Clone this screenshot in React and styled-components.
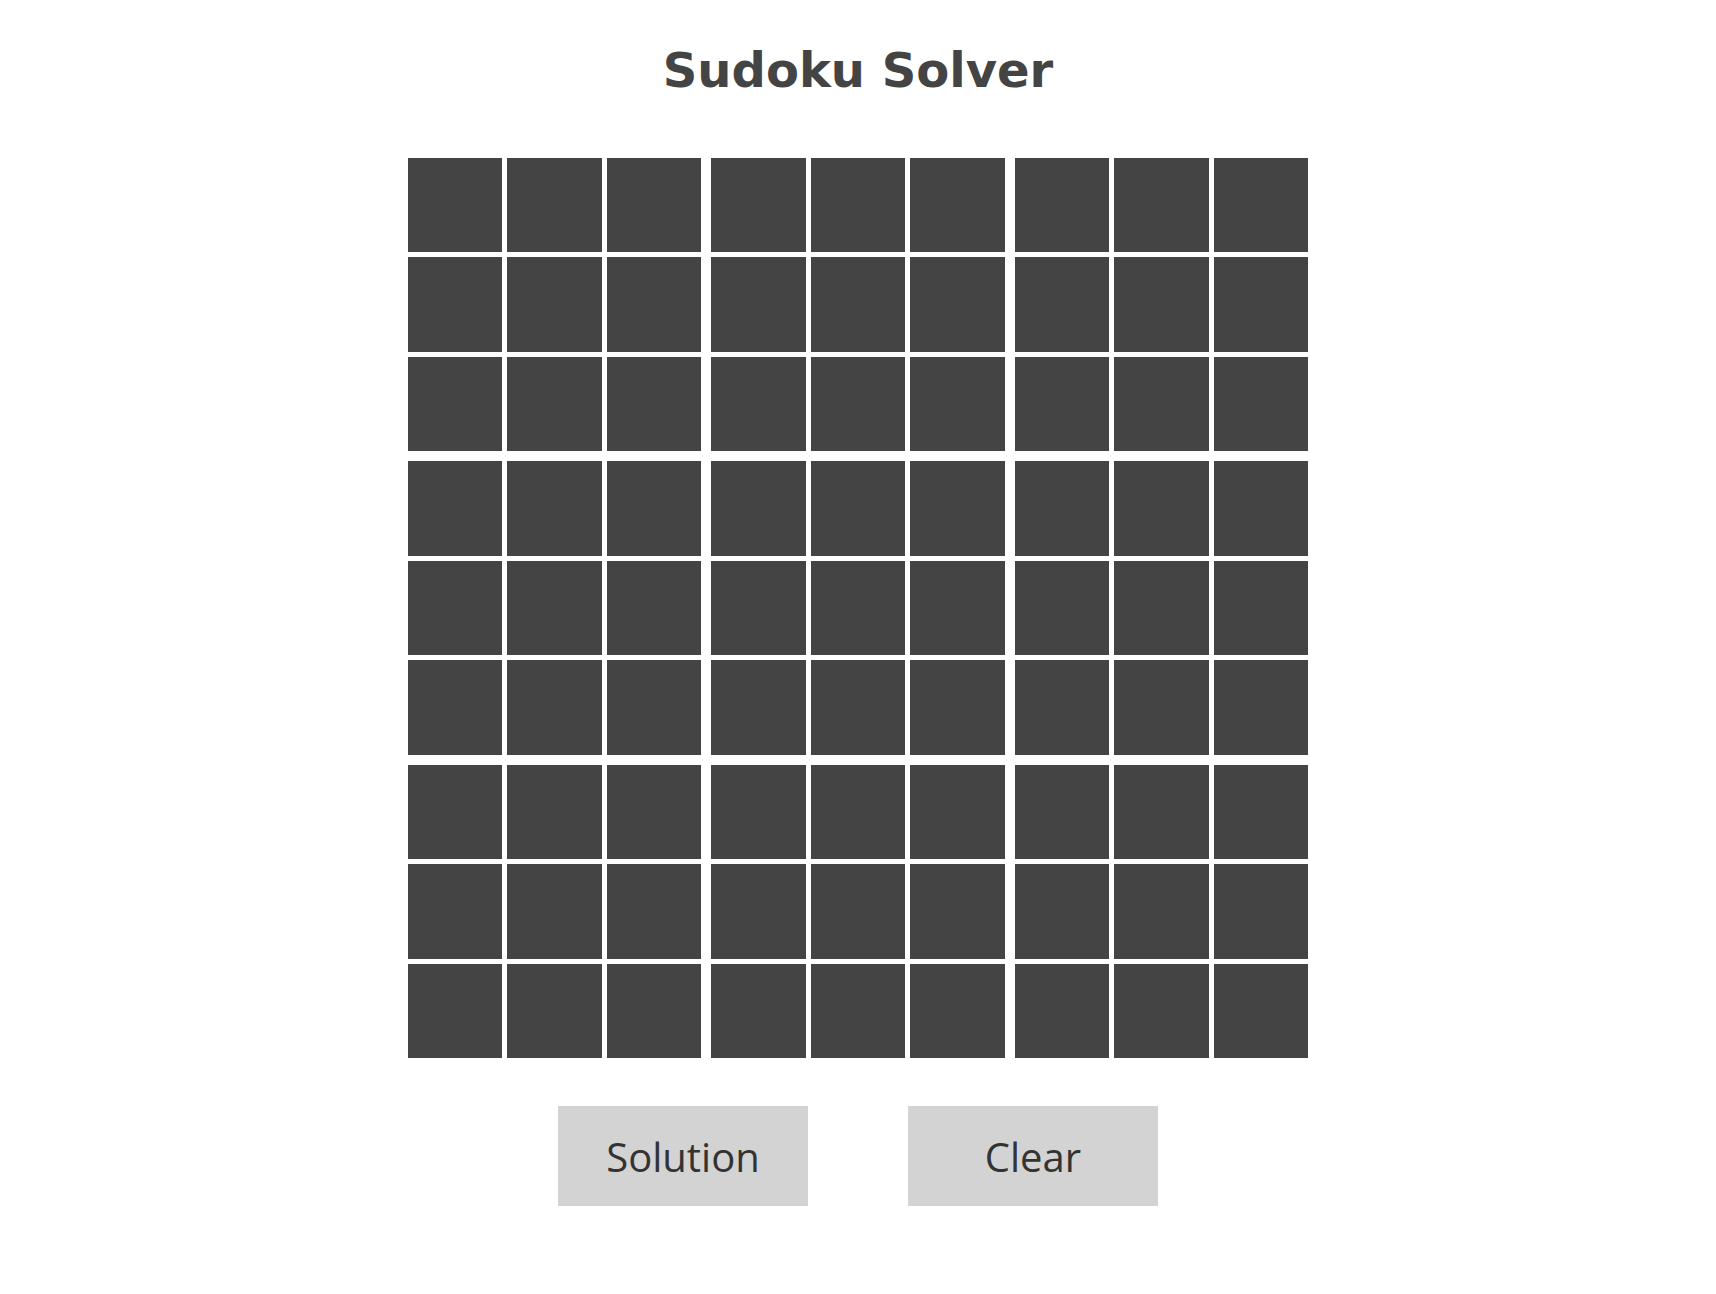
import React, { useState } from 'react';
import styled, { createGlobalStyle } from 'styled-components';

const GlobalStyle = createGlobalStyle`
  body {
    margin: 0;
    background: #ffffff;
    font-family: 'DejaVu Sans', sans-serif;
  }
`;

const Page = styled.div`
  display: flex;
  flex-direction: column;
  align-items: center;
  padding-top: 42px;
`;

const Title = styled.h1`
  margin: 0 0 60px;
  font-family: 'DejaVu Sans', sans-serif;
  font-size: 48px;
  line-height: 56px;
  font-weight: bold;
  color: #444444;
`;

const Board = styled.div`
  width: 900px;
  height: 900px;
  display: grid;
  grid-template-columns: repeat(3, 1fr);
  grid-template-rows: repeat(3, 1fr);
  gap: 10px;
`;

const Block = styled.div`
  display: grid;
  grid-template-columns: repeat(3, 1fr);
  grid-template-rows: repeat(3, 1fr);
  gap: 5px;
`;

const Cell = styled.input`
  width: 100%;
  height: 100%;
  box-sizing: border-box;
  border: none;
  outline: none;
  padding: 0;
  background: #444444;
  color: #ffffff;
  text-align: center;
  font-family: 'Open Sans', sans-serif;
  font-size: 40px;
`;

const Actions = styled.div`
  display: flex;
  gap: 100px;
  margin-top: 48px;
`;

const Button = styled.button`
  width: 250px;
  height: 100px;
  border: none;
  background: #d3d3d3;
  color: #333333;
  font-family: 'Open Sans', sans-serif;
  font-size: 40px;
  cursor: pointer;
  display: flex;
  align-items: center;
  justify-content: center;
`;

export default function App() {
  const [grid, setGrid] = useState(Array(81).fill(''));

  const update = (i, v) => {
    const next = grid.slice();
    next[i] = v.replace(/[^1-9]/g, '').slice(-1);
    setGrid(next);
  };

  // index of cell from block + position inside block
  const idx = (b, c) => {
    const row = Math.floor(b / 3) * 3 + Math.floor(c / 3);
    const col = (b % 3) * 3 + (c % 3);
    return row * 9 + col;
  };

  return (
    <>
      <GlobalStyle />
      <Page>
        <Title>Sudoku Solver</Title>
        <Board>
          {[...Array(9)].map((_, b) => (
            <Block key={b}>
              {[...Array(9)].map((_, c) => {
                const i = idx(b, c);
                return (
                  <Cell
                    key={i}
                    value={grid[i]}
                    onChange={(e) => update(i, e.target.value)}
                  />
                );
              })}
            </Block>
          ))}
        </Board>
        <Actions>
          <Button>Solution</Button>
          <Button onClick={() => setGrid(Array(81).fill(''))}>Clear</Button>
        </Actions>
      </Page>
    </>
  );
}
